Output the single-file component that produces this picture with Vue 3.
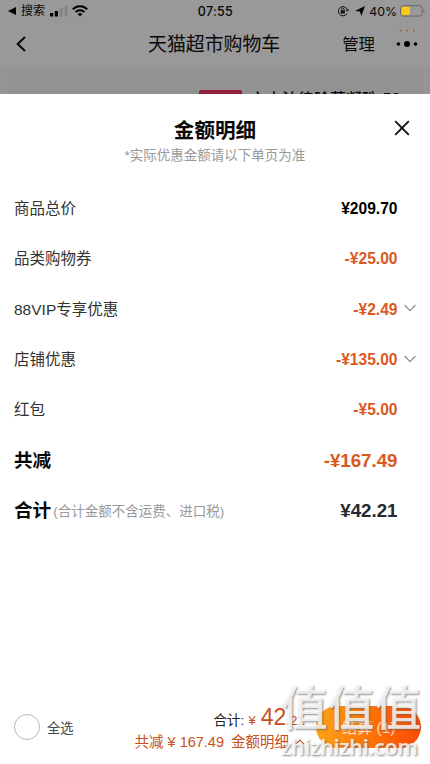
<template>
  <div class="page">
    <div class="status">
      <div class="status-left">
        <svg width="9" height="8" viewBox="0 0 9 8"><path d="M0 4L8 0V8Z" /></svg>
        <span class="back-app">搜索</span>
        <svg class="signal" width="18" height="12" viewBox="0 0 18 12">
          <rect x="0" y="8" width="3.2" height="3.6" rx="0.6" />
          <rect x="4.8" y="6" width="3.2" height="5.6" rx="0.6" />
          <rect x="9.8" y="3.2" width="3" height="8.4" rx="0.6" fill="#858585" />
          <rect x="14.6" y="0.4" width="3" height="11.2" rx="0.6" fill="#858585" />
        </svg>
        <svg class="wifi" width="16" height="12" viewBox="0 0 16 12" fill="none" stroke="#000" stroke-width="2">
          <path d="M0.8 4.3C4.8 0.2 11.2 0.2 15.2 4.3" />
          <path d="M3.5 7.1C6 4.6 10 4.6 12.5 7.1" />
          <path d="M5.7 9L8 11.6L10.3 9C9 7.8 7 7.8 5.7 9Z" fill="#000" stroke="none" />
        </svg>
      </div>
      <span class="clock">07:55</span>
      <div class="status-right">
        <svg width="12" height="12" viewBox="0 0 12 12" fill="none" stroke="#111">
          <path d="M10 8.5A4.6 4.6 0 1 1 10.5 5.2M8.8 4.8L10.6 6.2L11.8 4.4" />
          <rect x="3.7" y="5.3" width="4.2" height="3.2" fill="#111" stroke="none" />
          <path d="M4.6 5.5V4.4A1.2 1.2 0 0 1 7 4.4V5.5" stroke-width="0.9" />
        </svg>
        <svg class="location" width="10" height="10" viewBox="0 0 10 10"><path d="M10 0L6.3 10L5 5.6L0 4.9Z" /></svg>
        <span class="percent">40%</span>
        <svg width="26" height="12" viewBox="0 0 26 12">
          <rect x="0.5" y="0.7" width="21.6" height="10.4" rx="2.7" fill="none" stroke="#676767" />
          <rect x="1.5" y="1.7" width="8.5" height="8.4" rx="1.4" fill="#fcc914" />
          <path d="M23.4 4.2C25 4.8 25 7 23.4 7.6Z" fill="#676767" />
        </svg>
      </div>
    </div>

    <div class="navbar">
      <svg class="nav-back" width="10" height="16" viewBox="0 0 10 16" fill="none" stroke="#080808" stroke-width="2">
        <path d="M9 1L1.7 8L9 15" />
      </svg>
      <h1>天猫超市购物车</h1>
      <span class="manage">管理</span>
      <svg class="more" width="22" height="20" viewBox="0 0 22 20">
        <g fill="#a05c30">
          <circle cx="4.5" cy="2.5" r="0.9" />
          <circle cx="11" cy="2.5" r="0.9" />
          <circle cx="18" cy="2.5" r="0.9" />
        </g>
        <circle cx="2.4" cy="16" r="1.8" />
        <circle cx="11" cy="16" r="3" />
        <circle cx="19.5" cy="16" r="1.8" />
      </svg>
    </div>

    <div class="cart">
      <div class="cart-card">
        <span class="tag"></span>
        <span class="goods">六大法律除蒿凝珠 52</span>
      </div>
    </div>

    <div class="sheet">
      <div class="sheet-head">
        <h2>金额明细</h2>
        <p>*实际优惠金额请以下单页为准</p>
        <svg class="close" width="16" height="16" viewBox="0 0 16 16" fill="none" stroke="#111" stroke-width="1.9" @click="close">
          <path d="M1.2 1.2L14.8 14.8M14.8 1.2L1.2 14.8" />
        </svg>
      </div>

      <div class="rows">
        <div
          v-for="row in rows"
          :key="row.label"
          class="row"
          :class="{ strong: row.strong }"
        >
          <span class="label">{{ row.label }}</span>
          <span v-if="row.note" class="note">{{ row.note }}</span>
          <span class="amount" :class="row.color">{{ row.amount }}</span>
          <span class="fold">
            <svg v-if="row.more" width="12" height="8" viewBox="0 0 12 8" fill="none" stroke="#8c8c8c" stroke-width="1.2">
              <path d="M0.6 1L6 6.6L11.4 1" />
            </svg>
          </span>
        </div>
      </div>

      <div class="footer">
        <span class="check" @click="checked = !checked"></span>
        <span class="all">全选</span>
        <div class="sum">
          <div class="total">
            <span>合计:</span>
            <span class="yen">¥</span>
            <span class="int">42</span>
            <span class="dec">.21</span>
          </div>
          <div class="saved">
            <span>共减</span>
            <span class="saved-num">¥ 167.49</span>
            <span class="detail">金额明细</span>
            <svg width="10" height="6" viewBox="0 0 10 6" fill="none" stroke="#c94f20" stroke-width="1.1">
              <path d="M0.7 5.4L5 1L9.3 5.4" />
            </svg>
          </div>
        </div>
        <button class="pay">结算 (1)</button>
      </div>
    </div>

    <div class="watermark">
      <div class="mark-cn">值值值</div>
      <div class="mark-en">zhizhizhi.com</div>
    </div>
  </div>
</template>

<script setup>
import { ref } from "vue";

const checked = ref(false);

const rows = ref([
  { label: "商品总价", amount: "¥209.70", color: "black" },
  { label: "品类购物券", amount: "-¥25.00" },
  { label: "88VIP专享优惠", amount: "-¥2.49", more: true },
  { label: "店铺优惠", amount: "-¥135.00", more: true },
  { label: "红包", amount: "-¥5.00" },
  { label: "共减", amount: "-¥167.49", strong: true },
  {
    label: "合计",
    note: "(合计金额不含运费、进口税)",
    amount: "¥42.21",
    color: "dark",
    strong: true,
  },
]);

const close = () => {
  console.log("close");
};
</script>

<style>
body {
  background: #fff;
}
</style>

<style scoped>
.page {
  position: relative;
  width: 430px;
  height: 764px;
  overflow: hidden;
  display: flex;
  flex-direction: column;
  background: #999;
  color: #080808;
  font-family: "Liberation Sans", "Noto Sans CJK SC", sans-serif;
  white-space: nowrap;
}

.status {
  display: grid;
  grid-template-columns: 1fr auto 1fr;
  align-items: center;
  height: 22px;
  padding: 0 4px 0 8px;
  flex: none;
}

.status-left,
.status-right {
  display: flex;
  align-items: center;
}

.status-right {
  justify-content: flex-end;
}

.back-app {
  margin-left: 4px;
  font-size: 12px;
  line-height: 22px;
}

.signal {
  margin-left: 5px;
}

.wifi {
  margin-left: 4px;
}

.clock {
  font-family: Inter, sans-serif;
  font-size: 12.5px;
  font-weight: 500;
  letter-spacing: 0.3px;
  margin-right: 3px;
}

.location {
  margin: 0 4px 0 6px;
}

.percent {
  margin-right: 3px;
  font-family: Inter, sans-serif;
  font-size: 12.3px;
}

.navbar {
  display: grid;
  grid-template-columns: 132px 1fr auto auto;
  align-items: center;
  height: 44px;
  padding: 0 12px 0 16px;
  flex: none;
}

h1 {
  margin: 2px 0 0;
  font-size: 18.9px;
  font-weight: 400;
  line-height: 28px;
}

.manage {
  margin-right: 21px;
  font-size: 16.4px;
  line-height: 28px;
}

.more {
  margin-top: -12px;
}

.cart {
  height: 28px;
  padding: 6px 7px 0;
  box-sizing: border-box;
  background: #959595;
  flex: none;
}

.cart-card {
  display: flex;
  height: 22px;
  padding: 18px 0 0 192px;
  box-sizing: border-box;
  overflow: hidden;
  background: #929292;
}

.tag {
  width: 43px;
  height: 15px;
  box-sizing: border-box;
  border: 1px solid #a0142e;
  border-radius: 2px;
  background: #8a2440;
}

.goods {
  margin: 0 0 0 8px;
  font-size: 16px;
  line-height: 20px;
  font-weight: 500;
}

.sheet {
  display: flex;
  flex: 1;
  flex-direction: column;
  background: #fff;
}

.sheet-head {
  position: relative;
  height: 89px;
  padding-top: 22px;
  box-sizing: border-box;
  text-align: center;
}

h2 {
  margin: 0;
  font-size: 20.6px;
  font-weight: 700;
  line-height: 30px;
}

.sheet-head p {
  margin: 0;
  font-size: 13.5px;
  line-height: 20px;
  color: #999;
}

.close {
  position: absolute;
  top: 26px;
  right: 20px;
}

.row {
  display: flex;
  align-items: center;
  height: 50.3px;
  padding-left: 14px;
}

.label {
  margin-bottom: 2px;
  font-size: 15.5px;
  color: #333;
}

.note {
  margin-left: 2px;
  font-size: 13.5px;
  color: #999;
}

.amount {
  margin-top: 2px;
  margin-left: auto;
  font-size: 15.6px;
  font-weight: 700;
  color: #d9591e;
}

.amount.black {
  color: #000;
}

.amount.dark {
  color: #26282d;
}

.strong .label {
  font-size: 18.6px;
  font-weight: 700;
  color: #080808;
}

.strong .amount {
  font-size: 18.7px;
}

.fold {
  display: flex;
  width: 26px;
  margin-left: 6.5px;
}

.fold svg {
  margin-top: -1px;
}

.footer {
  display: flex;
  align-items: center;
  height: 74px;
  margin-top: auto;
  padding: 0 9px 0 14px;
}

.check {
  width: 26px;
  height: 26px;
  box-sizing: border-box;
  border: 1.5px solid #b8b8b8;
  border-radius: 50%;
}

.all {
  margin-left: 7px;
  font-size: 13.3px;
  color: #444;
}

.sum {
  display: flex;
  flex: 1;
  flex-direction: column;
  align-items: flex-end;
  margin-right: 11px;
  padding-top: 2px;
}

.total {
  display: flex;
  align-items: baseline;
  height: 27px;
  font-size: 13.6px;
  line-height: 27px;
  color: #222;
}

.yen {
  margin-left: 4px;
  font-size: 13px;
  color: #c94f20;
}

.int {
  margin-left: 5px;
  font-size: 23px;
  color: #c94f20;
}

.dec {
  font-size: 13.5px;
  color: #c94f20;
}

.saved {
  display: flex;
  align-items: center;
  height: 22px;
  font-size: 14.5px;
  line-height: 22px;
  color: #c94f20;
}

.saved-num {
  margin-left: 4px;
}

.detail {
  margin-left: 7px;
}

.saved svg {
  margin-left: 6px;
}

.pay {
  width: 105px;
  height: 42px;
  padding: 0 0 3px;
  border: 0;
  border-radius: 21px;
  background: linear-gradient(90deg, #ffa216, #ff7a08 45%, #fa4a05);
  color: rgba(255, 255, 255, 0.75);
  font-family: inherit;
  font-size: 15.3px;
}

/* stamp laid over the lower right corner */
.watermark {
  position: absolute;
  left: 281px;
  top: 683px;
  width: 146px;
  color: rgba(255, 255, 255, 0.82);
  text-shadow: 1px 1px 2px rgba(90, 90, 90, 0.7);
  pointer-events: none;
}

.mark-cn {
  font-size: 46.8px;
  font-weight: 500;
  line-height: 53px;
}

.mark-en {
  font-family: "Noto Sans", sans-serif;
  font-size: 21.4px;
  line-height: 22px;
  font-weight: 600;
  letter-spacing: -0.3px;
}
</style>
